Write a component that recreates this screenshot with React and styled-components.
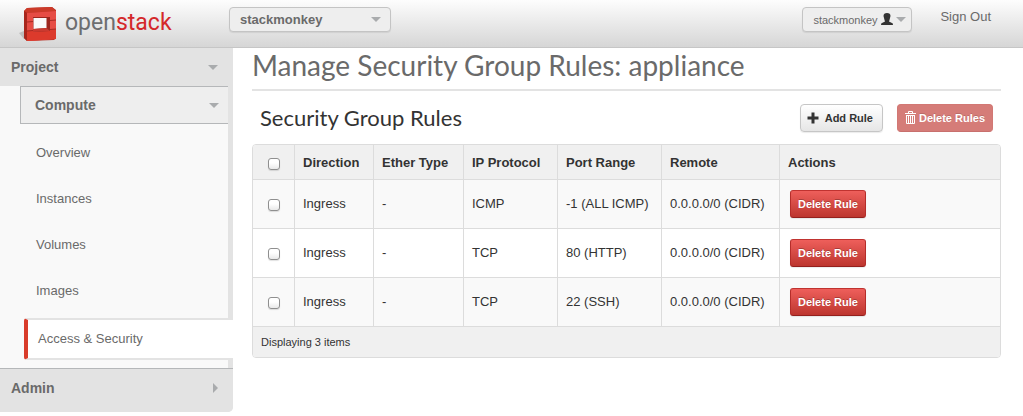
import React from "react";
import styled, { createGlobalStyle, css } from "styled-components";

const GlobalStyle = createGlobalStyle`
  *, *::before, *::after { box-sizing: border-box; }
  body {
    margin: 0;
    background: #fff;
    color: #333;
    font: 13px/18px "Liberation Sans", Arial, sans-serif;
  }
  button { font-family: inherit; cursor: pointer; }
  a { color: inherit; text-decoration: none; }
`;

const TopBar = styled.header`
  display: grid;
  grid-template-columns: 229px 1fr auto;
  align-items: start;
  height: 48px;
  padding-right: 32px;
  border-bottom: 1px solid #c6c6c6;
  background: linear-gradient(#fdfdfd, #d6d6d6);
`;

const Brand = styled.a`
  display: flex;
  gap: 8px;
  padding: 6px 0 0 19px;
`;

const BrandName = styled.span`
  color: #6d6e70;
  font: 23px/34px Roboto, sans-serif;
  em { color: #d4282a; font-style: normal; }
`;

const PickerButton = styled.button`
  display: flex;
  align-items: center;
  justify-content: space-between;
  height: 25px;
  margin-top: 7px;
  border: 1px solid #c4c4c4;
  border-radius: 4px;
  background: #eee;
  box-shadow: 0 1px 1px rgba(0, 0, 0, 0.08);
  color: #6a6a6a;
`;

const ProjectPicker = styled(PickerButton)`
  width: 162px;
  padding: 0 9px 0 10px;
  font-size: 13px;
  font-weight: bold;
`;

const UserPicker = styled(PickerButton)`
  width: 110px;
  padding: 0 5px 0 10px;
  font-size: 11px;
`;

const UserArea = styled.div`
  display: flex;
  gap: 28px;
`;

const SignOut = styled.a`
  padding-top: 8px;
  color: #6a6a6a;
`;

const Caret = styled.span`
  border: 5px solid transparent;
  border-bottom-width: 0;
  border-top-color: #a9abad;
  ${(p) => p.$right && css`
    border: 5px solid transparent;
    border-right-width: 0;
    border-left-color: #a9abad;
  `}
`;

const Layout = styled.div`
  display: grid;
  grid-template-columns: 233px minmax(0, 1fr);
  align-items: start;
`;

const Sidebar = styled.nav`
  overflow: hidden;
  border-radius: 0 0 5px 0;
  background: linear-gradient(to right, #f9f9f9 228px, #e3e3e3 228px);
`;

const SectionButton = styled.button`
  display: flex;
  align-items: center;
  justify-content: space-between;
  width: 100%;
  height: ${(p) => (p.$last ? 44 : 38)}px;
  padding: 0 15px 0 11px;
  border: 0;
  background: #e3e3e3;
  color: #6a6a6a;
  font-size: 14px;
  font-weight: bold;
  ${(p) => p.$last && css`
    border-top: 1px solid #b5b7b9;
    padding-bottom: 6px;
  `}
`;

const GroupButton = styled.button`
  display: flex;
  align-items: center;
  justify-content: space-between;
  width: 208px;
  height: 38px;
  margin-left: 20px;
  padding: 0 9px 0 14px;
  border: 1px solid #b5b7b9;
  border-right: 0;
  background: #eee;
  color: #6a6a6a;
  font-size: 14px;
  font-weight: bold;
`;

const Links = styled.ul`
  margin: 0;
  padding: 11px 0 8px 24px;
  list-style: none;
`;

const NavLink = styled.a`
  display: block;
  margin-bottom: 10px;
  padding: 9px 12px;
  color: #6a6a6a;
  ${(p) => p.$active && css`
    margin: -1px 0 0;
    padding: 10px;
    border: 2px solid #e3e3e3;
    border-width: 2px 0;
    border-left: 4px solid #d93c2b;
    border-radius: 3px 0 0 3px;
    background: #fff;
  `}
`;

const Main = styled.main`
  padding: 0 22px 0 19px;
`;

const PageTitle = styled.h1`
  margin: 0;
  padding-bottom: 7px;
  border-bottom: 2px solid #e3e3e3;
  color: #6a6a6a;
  font: 28px/34px Lato, sans-serif;
`;

const TableBar = styled.div`
  display: flex;
  align-items: center;
  justify-content: space-between;
  padding: 13px 8px 12px;
`;

const TableTitle = styled.h2`
  margin: 0;
  color: #333;
  font: 22px/28px Lato, sans-serif;
`;

const Actions = styled.div`
  display: flex;
  gap: 14px;
`;

const Button = styled.button`
  display: inline-flex;
  align-items: center;
  gap: 6px;
  height: 28px;
  padding: 0 9px 0 6px;
  border: 1px solid #c6c6c6;
  border-radius: 4px;
  background: linear-gradient(#fff, #e6e6e6);
  box-shadow: 0 1px 1px rgba(0, 0, 0, 0.08);
  color: #333;
  font-size: 11px;
  font-weight: bold;
  white-space: nowrap;
`;

const DangerButton = styled(Button)`
  padding: 0 7px;
  border-color: #c03330 #b52d2a #94201d;
  border-radius: 3px;
  background: linear-gradient(#ee5f5b, #bd362f);
  color: #fff;
  text-shadow: 0 -1px 0 rgba(0, 0, 0, 0.25);
`;

const BulkDeleteButton = styled(DangerButton)`
  gap: 3px;
  border-color: #d27874 #d27874 #c8706d;
  border-radius: 4px;
  background: #d57c78;
  box-shadow: none;
  text-shadow: 0 -1px 0 rgba(0, 0, 0, 0.15);
`;

const TableFrame = styled.div`
  overflow: hidden;
  border: 1px solid #dcdcdc;
  border-radius: 4px;
`;

const Table = styled.table`
  width: 100%;
  table-layout: fixed;
  border-spacing: 0;
  tbody tr:nth-child(odd) { background: #f9f9f9; }
`;

const Col = styled.col`
  width: ${(p) => (p.$width ? `${p.$width}px` : "auto")};
`;

const cell = css`
  padding: 0 8px;
  border-bottom: 1px solid #dcdcdc;
  text-align: left;
  & + & { border-left: 1px solid #dcdcdc; }
`;

const HeadCell = styled.th`
  ${cell}
  height: 35px;
  padding-top: 2px;
  background: #f0f0f0;
  font-weight: bold;
`;

const Cell = styled.td`
  ${cell}
  height: 49px;
`;

const FootCell = styled.td`
  height: 30px;
  padding: 0 8px;
  background: #f0f0f0;
  font-size: 11px;
`;

const Check = styled.input`
  appearance: none;
  display: block;
  width: 12px;
  height: 12px;
  margin: 2px auto 0 7px;
  border: 1px solid #8f8f8f;
  border-radius: 3px;
  background: linear-gradient(#fff 40%, #e9e9e9);
  box-shadow: 0 1px 1px rgba(0, 0, 0, 0.12);
  &:checked { background: #6a6a6a; }
`;

const RowAction = styled.div`
  display: flex;
  padding-left: 2px;
`;

const rules = [
  { protocol: "ICMP", port: "-1 (ALL ICMP)" },
  { protocol: "TCP", port: "80 (HTTP)" },
  { protocol: "TCP", port: "22 (SSH)" },
];

const columns = ["Direction", "Ether Type", "IP Protocol", "Port Range", "Remote", "Actions"];
const widths = [41, 79, 90, 94, 104, 118, null];

function BrandMark() {
  return (
    <svg width="38" height="36" viewBox="0 0 38 36" aria-hidden="true">
      <path d="M0 27 5 25V33Z" fill="#999" opacity=".5" />
      <path d="M5 5 8 2 33 1 37 4V32L35 34 8 35 5 32Z" fill="#b52d22" />
      <path d="M5 5 8 2 33 1 37 5 8 7Z" fill="#cb3a29" />
      <path d="M5 5 8 7V35L5 32Z" fill="#a8261c" />
      <path fillRule="evenodd" d="M8 7 37 5V33L8 35ZM14 11V26L31 25V11Z" fill="#e64c44" />
      <path d="M8 25 14 24.5V26L31 25V23.5L37 23V33L8 35Z" fill="#dc3a2c" />
      <path d="M14 11H31V25L14 26Z" fill="#9c261e" />
      <path d="M14.5 12H27.5V22L14.5 23Z" fill="#fafafa" />
      <path d="M14 23 27.5 22 31 25 14 26Z" fill="#c93a30" />
      <path d="M8 16 14 15.5M31 14.5 37 14M8 25 14 24.5M31 23.5 37 23" stroke="#a82a22" fill="none" />
    </svg>
  );
}

function UserIcon() {
  return (
    <svg width="12" height="13" viewBox="0 0 12 13" aria-hidden="true">
      <path d="M2.5 3Q2.5 0 6 0T9.5 3L8.5 7 8 8.5 11 10Q12 10 12 12H0Q0 10 1 10L4 8.5 3.5 7Z" fill="#333" />
    </svg>
  );
}

function PlusIcon() {
  return (
    <svg width="12" height="12" viewBox="0 0 12 12" aria-hidden="true">
      <path d="M4.5 .5H7.5V4.5H11.5V7.5H7.5V11.5H4.5V7.5H.5V4.5H4.5Z" fill="#333" />
    </svg>
  );
}

function TrashIcon() {
  return (
    <svg width="11" height="14" viewBox="0 0 11 14" aria-hidden="true">
      <path d="M3.5 2V.5H7.5V2M0 2.5H11M1.5 4V12.5H9.5V4M1 4.5H10M3.5 5V12M5.5 5V12M7.5 5V12" stroke="#fff" fill="none" />
    </svg>
  );
}

export default function App() {
  return (
    <>
      <GlobalStyle />
      <TopBar>
        <Brand href="#" aria-label="openstack">
          <BrandMark />
          <BrandName>open<em>stack</em></BrandName>
        </Brand>
        <ProjectPicker type="button">stackmonkey<Caret /></ProjectPicker>
        <UserArea>
          <UserPicker type="button">stackmonkey<UserIcon /><Caret /></UserPicker>
          <SignOut href="#">Sign Out</SignOut>
        </UserArea>
      </TopBar>
      <Layout>
        <Sidebar>
          <SectionButton type="button">Project<Caret /></SectionButton>
          <GroupButton type="button">Compute<Caret /></GroupButton>
          <Links>
            {["Overview", "Instances", "Volumes", "Images"].map((name) => (
              <li key={name}><NavLink href="#">{name}</NavLink></li>
            ))}
            <li><NavLink href="#" $active aria-current="page">Access &amp; Security</NavLink></li>
          </Links>
          <SectionButton type="button" $last>Admin<Caret $right /></SectionButton>
        </Sidebar>
        <Main>
          <PageTitle>Manage Security Group Rules: appliance</PageTitle>
          <TableBar>
            <TableTitle>Security Group Rules</TableTitle>
            <Actions>
              <Button type="button"><PlusIcon />Add Rule</Button>
              <BulkDeleteButton type="button"><TrashIcon />Delete Rules</BulkDeleteButton>
            </Actions>
          </TableBar>
          <TableFrame>
            <Table>
              <colgroup>{widths.map((w, i) => <Col key={i} $width={w} />)}</colgroup>
              <thead>
                <tr>
                  <HeadCell><Check type="checkbox" aria-label="Select all rules" /></HeadCell>
                  {columns.map((name) => <HeadCell key={name}>{name}</HeadCell>)}
                </tr>
              </thead>
              <tbody>
                {rules.map((rule) => (
                  <tr key={rule.port}>
                    <Cell><Check type="checkbox" aria-label={`Select ${rule.port}`} /></Cell>
                    <Cell>Ingress</Cell>
                    <Cell>-</Cell>
                    <Cell>{rule.protocol}</Cell>
                    <Cell>{rule.port}</Cell>
                    <Cell>0.0.0.0/0 (CIDR)</Cell>
                    <Cell><RowAction><DangerButton type="button">Delete Rule</DangerButton></RowAction></Cell>
                  </tr>
                ))}
              </tbody>
              <tfoot>
                <tr><FootCell colSpan={7}>Displaying 3 items</FootCell></tr>
              </tfoot>
            </Table>
          </TableFrame>
        </Main>
      </Layout>
    </>
  );
}
